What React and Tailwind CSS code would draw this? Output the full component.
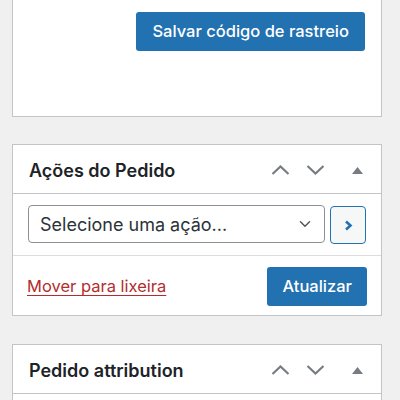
import { ChevronDown } from 'lucide-react';

function HeaderControls() {
  return (
    <div className="flex items-center text-[#787c82]">
      <svg className="w-[19px] h-[10px]" viewBox="0 0 19 10" fill="none" stroke="currentColor" strokeWidth={2.2}>
        <path d="M1.5 9 L9.5 1.5 L17.5 9" />
      </svg>
      <svg className="ml-[16px] w-[19px] h-[10px]" viewBox="0 0 19 10" fill="none" stroke="currentColor" strokeWidth={2.2}>
        <path d="M1.5 1 L9.5 8.5 L17.5 1" />
      </svg>
      <svg className="ml-[27px] w-[11px] h-[7px]" viewBox="0 0 11 7" fill="currentColor">
        <path d="M5.5 0 L11 7 L0 7 Z" />
      </svg>
    </div>
  );
}

function PanelHeader({ title }) {
  return (
    <div className="h-[49px] pt-[2px] border-b border-[#c3c4c7] flex items-center justify-between pl-[16px] pr-[18px]">
      <h2 className="text-[18px] font-semibold text-[#1d2327]">{title}</h2>
      <HeaderControls />
    </div>
  );
}

export default function App() {
  return (
    <div className="w-[400px] h-[400px] overflow-hidden bg-[#f0f0f1] font-['Inter',sans-serif]">
      {/* Painel de rastreio (cortado em cima) */}
      <div className="ml-[12px] w-[370px] bg-white border-x border-b border-[#c3c4c7] pt-[12px] pb-[65px] pr-[16px] flex justify-end">
        <button className="h-[39px] px-[16px] rounded-[3px] bg-[#2271b1] text-white text-[16.5px] font-medium">
          Salvar código de rastreio
        </button>
      </div>

      {/* Ações do Pedido */}
      <div className="mt-[27px] ml-[12px] w-[370px] bg-white border border-[#c3c4c7]">
        <PanelHeader title="Ações do Pedido" />
        <div className="flex items-center gap-[5px] pl-[15px] pr-[15px] pt-[10px] pb-[11px] border-b border-[#dcdcde]">
          <div className="flex-1 h-[38px] border border-[#8c8f94] rounded-[4px] flex items-center justify-between pl-[11px] pr-[10px]">
            <span className="text-[18px] text-[#2c3338]">Selecione uma ação...</span>
            <ChevronDown className="w-[18px] h-[18px] text-[#50575e]" strokeWidth={2} />
          </div>
          <div className="w-[36px] h-[38px] mt-[2px] rounded-[4px] border border-[#2271b1] bg-[#f6f7f7] flex items-center justify-center">
            <svg className="w-[9px] h-[11px]" viewBox="0 0 9 11" fill="none" stroke="#2271b1" strokeWidth={2.6}>
              <path d="M2 1.5 L6.5 5.5 L2 9.5" />
            </svg>
          </div>
        </div>
        <div className="flex items-center justify-between pl-[14px] pr-[14px] pt-[11px] pb-[9px]">
          <a href="#" className="text-[16.5px] text-[#b32d2e] underline underline-offset-[3px]">Mover para lixeira</a>
          <button className="h-[39px] px-[15px] rounded-[3px] bg-[#2271b1] text-white text-[16.5px] font-medium">
            Atualizar
          </button>
        </div>
      </div>

      {/* Pedido attribution */}
      <div className="mt-[28px] ml-[12px] w-[370px] bg-white border border-[#c3c4c7]">
        <PanelHeader title="Pedido attribution" />
        <div className="h-[40px]" />
      </div>
    </div>
  );
}
